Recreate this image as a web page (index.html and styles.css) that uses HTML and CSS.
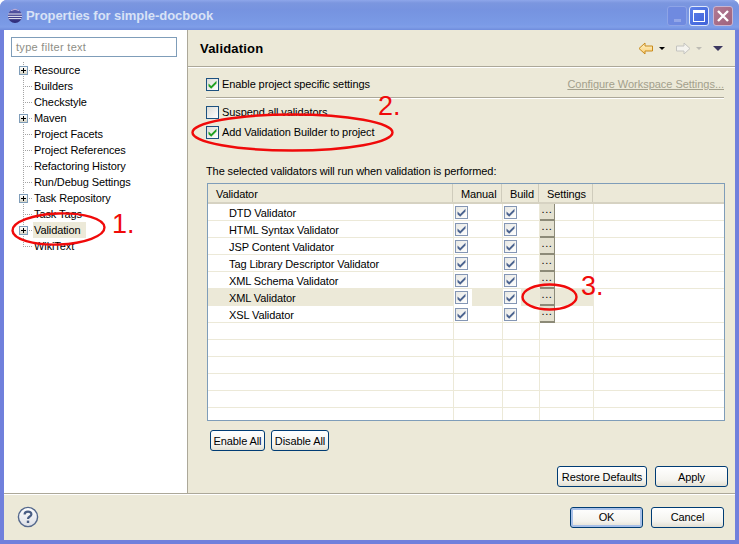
FILE: index.html
```html
<!DOCTYPE html>
<html lang="en">
<head>
<meta charset="utf-8">
<title>Properties for simple-docbook</title>
<link rel="stylesheet" href="styles.css">
</head>
<body>
<svg class="defs" width="0" height="0" aria-hidden="true">
  <symbol id="check" viewBox="0 0 11 11"><path d="M1.5 4.6 L4.2 7 L9.5 1.8 L9.5 4.6 L4.2 9.8 L1.5 7.2 Z" fill="currentColor"/></symbol>
</svg>
<div class="window">
  <header class="titlebar">
    <svg class="app-icon" width="16" height="16" viewBox="0 0 16 16">
      <defs><linearGradient id="ec" x1="0" y1="0" x2="0" y2="1"><stop offset="0" stop-color="#5a5aa8"/><stop offset="1" stop-color="#2c2a78"/></linearGradient></defs>
      <circle cx="8" cy="8" r="7" fill="url(#ec)"/>
      <path d="M1.2 6h13.6M1 8.4h14M1.6 10.6h12.8" stroke="#e8e8f4" stroke-width="1"/>
      <path d="M4 2.6a7 7 0 0 1 8 0" stroke="#c6b8e0" stroke-width="1" fill="none"/>
    </svg>
    <span class="title">Properties for simple-docbook</span>
    <div class="win-btns">
      <span class="win-btn win-min"><i class="min-glyph"></i></span>
      <span class="win-btn win-max"><i class="max-glyph"></i></span>
      <span class="win-btn win-close">
        <svg width="14" height="14" viewBox="0 0 14 14"><path d="M2 2 L12 12 M12 2 L2 12" stroke="#fff" stroke-width="2.4"/></svg>
      </span>
    </div>
  </header>

  <div class="client">
    <div class="panes">
      <aside class="sidebar">
        <div class="filter">type filter text</div>
        <ul class="tree">
          <li class="node"><span class="exp"></span><span class="label">Resource</span></li>
          <li class="node"><span class="noexp"></span><span class="label">Builders</span></li>
          <li class="node"><span class="noexp"></span><span class="label">Checkstyle</span></li>
          <li class="node"><span class="exp"></span><span class="label">Maven</span></li>
          <li class="node"><span class="noexp"></span><span class="label">Project Facets</span></li>
          <li class="node"><span class="noexp"></span><span class="label">Project References</span></li>
          <li class="node"><span class="noexp"></span><span class="label">Refactoring History</span></li>
          <li class="node"><span class="noexp"></span><span class="label">Run/Debug Settings</span></li>
          <li class="node"><span class="exp"></span><span class="label">Task Repository</span></li>
          <li class="node"><span class="noexp"></span><span class="label">Task Tags</span></li>
          <li class="node"><span class="exp"></span><span class="label selected">Validation</span></li>
          <li class="node last"><span class="noexp"></span><span class="label">WikiText</span></li>
        </ul>
      </aside>

      <main class="main">
        <div class="page-head">
          <h1 class="page-title">Validation</h1>
          <div class="page-tools">
            <svg width="16" height="13" viewBox="0 0 16 13"><defs><linearGradient id="ba" x1="0" y1="0" x2="0" y2="1"><stop offset="0" stop-color="#fff4cc"/><stop offset="1" stop-color="#f8cc70"/></linearGradient></defs><path d="M1 6.5 L7 1 V4 H14.5 V9 H7 V12 Z" fill="url(#ba)" stroke="#c88a1c"/></svg>
            <i class="tri tri-black tool-gap-a"></i>
            <svg class="tool-gap-b" width="16" height="13" viewBox="0 0 16 13"><path d="M15 6.5 L9 1 V4 H1.5 V9 H9 V12 Z" fill="#f4f3ee" stroke="#c4c4c0"/></svg>
            <i class="tri tri-grey tool-gap-a"></i>
            <i class="tri-menu"></i>
          </div>
        </div>

        <div class="page-body">
          <div class="project-row">
            <label class="check-row"><span class="cb"><svg class="tick" width="11" height="11"><use href="#check"/></svg></span>Enable project specific settings</label>
            <a class="workspace-link">Configure Workspace Settings...</a>
          </div>
          <hr class="rule">
          <label class="check-row suspend"><span class="cb"></span>Suspend all validators</label>
          <label class="check-row add"><span class="cb"><svg class="tick" width="11" height="11"><use href="#check"/></svg></span>Add Validation Builder to project</label>
          <p class="intro">The selected validators will run when validation is performed:</p>

          <div class="vtable">
            <div class="vhead">
              <span class="vh">Validator</span>
              <span class="vh">Manual</span>
              <span class="vh">Build</span>
              <span class="vh">Settings</span>
            </div>
            <div class="vrow"><span class="vname">DTD Validator</span><span class="vc"><span class="tcb"><svg width="11" height="11"><use href="#check"/></svg></span></span><span class="vc"><span class="tcb"><svg width="11" height="11"><use href="#check"/></svg></span></span><span class="vc vbtn"><button class="dots">...</button></span><span class="vc"></span></div>
            <div class="vrow"><span class="vname">HTML Syntax Validator</span><span class="vc"><span class="tcb"><svg width="11" height="11"><use href="#check"/></svg></span></span><span class="vc"><span class="tcb"><svg width="11" height="11"><use href="#check"/></svg></span></span><span class="vc vbtn"><button class="dots">...</button></span><span class="vc"></span></div>
            <div class="vrow"><span class="vname">JSP Content Validator</span><span class="vc"><span class="tcb"><svg width="11" height="11"><use href="#check"/></svg></span></span><span class="vc"><span class="tcb"><svg width="11" height="11"><use href="#check"/></svg></span></span><span class="vc vbtn"><button class="dots">...</button></span><span class="vc"></span></div>
            <div class="vrow"><span class="vname">Tag Library Descriptor Validator</span><span class="vc"><span class="tcb"><svg width="11" height="11"><use href="#check"/></svg></span></span><span class="vc"><span class="tcb"><svg width="11" height="11"><use href="#check"/></svg></span></span><span class="vc vbtn"><button class="dots">...</button></span><span class="vc"></span></div>
            <div class="vrow"><span class="vname">XML Schema Validator</span><span class="vc"><span class="tcb"><svg width="11" height="11"><use href="#check"/></svg></span></span><span class="vc"><span class="tcb"><svg width="11" height="11"><use href="#check"/></svg></span></span><span class="vc vbtn"><button class="dots">...</button></span><span class="vc"></span></div>
            <div class="vrow active"><span class="vname">XML Validator</span><span class="vc"><span class="tcb"><svg width="11" height="11"><use href="#check"/></svg></span></span><span class="vc"><span class="tcb"><svg width="11" height="11"><use href="#check"/></svg></span></span><span class="vc vbtn"><button class="dots">...</button></span><span class="vc plain"></span></div>
            <div class="vrow"><span class="vname">XSL Validator</span><span class="vc"><span class="tcb"><svg width="11" height="11"><use href="#check"/></svg></span></span><span class="vc"><span class="tcb"><svg width="11" height="11"><use href="#check"/></svg></span></span><span class="vc vbtn"><button class="dots">...</button></span><span class="vc"></span></div>
            <div class="vrow"><span class="vname"></span><span class="vc"></span><span class="vc"></span><span class="vc"></span><span class="vc"></span></div>
            <div class="vrow"><span class="vname"></span><span class="vc"></span><span class="vc"></span><span class="vc"></span><span class="vc"></span></div>
            <div class="vrow"><span class="vname"></span><span class="vc"></span><span class="vc"></span><span class="vc"></span><span class="vc"></span></div>
            <div class="vrow"><span class="vname"></span><span class="vc"></span><span class="vc"></span><span class="vc"></span><span class="vc"></span></div>
            <div class="vrow"><span class="vname"></span><span class="vc"></span><span class="vc"></span><span class="vc"></span><span class="vc"></span></div>
            <div class="vrow"><span class="vname"></span><span class="vc"></span><span class="vc"></span><span class="vc"></span><span class="vc"></span></div>
          </div>

          <div class="table-actions">
            <button class="btn btn-enable">Enable All</button>
            <button class="btn btn-disable">Disable All</button>
          </div>
          <div class="page-actions">
            <button class="btn btn-restore">Restore Defaults</button>
            <button class="btn btn-apply">Apply</button>
          </div>
        </div>
      </main>
    </div>

    <footer class="footer">
      <svg class="help" width="22" height="22" viewBox="0 0 22 22">
        <defs><linearGradient id="hp" x1="0" y1="0" x2="0" y2="1"><stop offset="0" stop-color="#fff"/><stop offset="1" stop-color="#dcdfe6"/></linearGradient></defs>
        <circle cx="11" cy="11" r="9.6" fill="url(#hp)" stroke="#54688c" stroke-width="1.4"/>
        <path d="M7.6 8.4 C7.6 4.8 14.4 4.8 14.4 8.2 C14.4 10.6 11 10.4 11 13" fill="none" stroke="#4a5e84" stroke-width="2.2"/>
        <rect x="9.8" y="14.6" width="2.4" height="2.4" fill="#4a5e84"/>
      </svg>
      <div class="footer-btns">
        <button class="btn btn-ok">OK</button>
        <button class="btn btn-cancel">Cancel</button>
      </div>
    </footer>
  </div>
</div>

<svg class="marks" width="739" height="544" viewBox="0 0 739 544" aria-hidden="true">
  <ellipse cx="58.5" cy="229" rx="46" ry="15.5" transform="rotate(-2 58.5 229)"/>
  <ellipse cx="292.5" cy="132.5" rx="100" ry="18"/>
  <ellipse cx="549.5" cy="297" rx="27" ry="12.5"/>
</svg>
<span class="note note-1">1.</span>
<span class="note note-2">2.</span>
<span class="note note-3">3.</span>
</body>
</html>
```
FILE: styles.css
```css
* { box-sizing: border-box; }
html, body { margin: 0; padding: 0; }
body {
  width: 739px;
  height: 544px;
  overflow: hidden;
  position: relative;
  font: 11px/16px "Liberation Sans", Arial, sans-serif;
  letter-spacing: -0.1px;
  color: #000;
  background: #fff;
}
.defs { position: absolute; }

.window {
  width: 739px;
  height: 544px;
  display: flex;
  flex-direction: column;
  background: #7080dc;
  border-radius: 7px 7px 0 0;
}

.titlebar {
  height: 30px;
  flex: none;
  display: flex;
  align-items: center;
  padding: 2px 6px 0 7px;
  border-radius: 7px 7px 0 0;
  background: linear-gradient(to bottom, #8ea6ea 0, #7b96df 3px, #7693e0 10px, #7a9ae6 24px, #7f9ee8 27px, #6f8cdc 30px);
}
.app-icon { margin-right: 3px; flex: none; }
.title {
  font: bold 13px/16px "Liberation Sans", Arial, sans-serif;
  letter-spacing: -0.05px;
  color: #d8e2f6;
}
.win-btns { margin-left: auto; display: flex; gap: 2px; }
.win-btn {
  width: 20px;
  height: 20px;
  border-radius: 3px;
  border: 1px solid #a8bcec;
  display: flex;
  align-items: center;
  justify-content: center;
  position: relative;
}
.win-min { background: #6f8ae0; border-color: #8ea4e6; }
.win-max { background: linear-gradient(135deg, #5c80ea, #3f62d8); border-color: #dfe7fa; }
.win-close { background: linear-gradient(135deg, #b07a94, #a0627c); border-color: #c8b4d0; margin-left: 2px; }
.min-glyph { width: 7px; height: 3px; background: #92a6e8; margin-top: 8px; }
.max-glyph { width: 12px; height: 12px; border: 1px solid #fff; border-top-width: 3px; }

.client {
  flex: 1;
  margin: 0 4px 4px;
  min-height: 0;
  display: flex;
  flex-direction: column;
  background: #ece9d8;
}
.panes {
  height: 464px;
  flex: none;
  display: flex;
  border-bottom: 1px solid #aca899;
}

.sidebar {
  width: 184px;
  flex: none;
  background: #fff;
  border-right: 1px solid #aca899;
  padding: 7px 0 0 7px;
}
.filter {
  width: 166px;
  height: 20px;
  border: 1px solid #7f9db9;
  padding: 1px 4px;
  color: #8e8e86;
  line-height: 16px;
  letter-spacing: 0.3px;
}
.tree { list-style: none; margin: 5px 0 0; padding: 0 0 0 8px; }
.node {
  height: 16px;
  display: flex;
  align-items: center;
  background-image:
    repeating-linear-gradient(to bottom, #a4a4a4 0 1px, transparent 1px 2px),
    repeating-linear-gradient(to right, #a4a4a4 0 1px, transparent 1px 2px);
  background-repeat: no-repeat;
  background-size: 1px 16px, 10px 1px;
  background-position: 4px 0, 4px 8px;
}
.node.last { background-size: 1px 8px, 10px 1px; }
.exp, .noexp { width: 9px; height: 9px; flex: none; margin-right: 5px; }
.exp {
  border: 1px solid #7f9db9;
  background:
    linear-gradient(#000, #000) center / 5px 1px no-repeat,
    linear-gradient(#000, #000) center / 1px 5px no-repeat,
    linear-gradient(to bottom, #fff, #d8d6c8);
}
.label { padding: 0 1px; position: relative; line-height: 16px; }
.label.selected { background: #ece9d8; padding-right: 5px; }

.main { flex: 1; min-width: 0; display: flex; flex-direction: column; }
.page-head {
  height: 36px;
  flex: none;
  display: flex;
  align-items: center;
  justify-content: space-between;
  padding: 0 12px 0 12px;
  border-bottom: 1px solid #aca899;
  box-sizing: content-box;
  box-shadow: 0 1px 0 #fff;
}
.page-title {
  margin: 1px 0 0;
  font: bold 13px/16px "Liberation Sans", Arial, sans-serif;
  letter-spacing: 0.2px;
}
.page-tools { display: flex; align-items: center; margin-top: 1px; }
.tri, .tri-menu { display: block; width: 0; height: 0; border-style: solid; border-color: transparent; }
.tri { border-width: 3px 3px 0; }
.tri-black { border-top-color: #000; }
.tri-grey { border-top-color: #bdbcb4; }
.tool-gap-a { margin-left: 5px; }
.tool-gap-b { margin-left: 10px; }
.tri-menu { border-width: 5px 5px 0; border-top-color: #3c3860; margin-left: 11px; }

.page-body { flex: 1; position: relative; padding: 9px 11px 0 18px; display: flex; flex-direction: column; }
.project-row { display: flex; justify-content: space-between; align-items: center; height: 16px; }
.check-row { display: flex; align-items: center; gap: 3px; height: 16px; }
.cb {
  width: 13px;
  height: 13px;
  flex: none;
  border: 1px solid #1c5180;
  background: linear-gradient(135deg, #dcdcd7, #fff);
  color: #21a121;
  display: block;
}
.tick { display: block; }
.workspace-link { color: #a3a08c; text-decoration: underline; letter-spacing: -0.03px; }
.rule {
  width: 100%;
  margin: 5px 0 0;
  height: 2px;
  border: 0;
  border-top: 1px solid #aca899;
  border-bottom: 1px solid #fff;
}
.suspend { margin-top: 5px; }
.add { margin-top: 4px; }
.intro { margin: 23px 0 0; height: 16px; }

.vtable {
  margin: 4px 0 0 1px;
  width: 518px;
  height: 238px;
  border: 1px solid #7f9db9;
  background: #fff;
  overflow: hidden;
  flex: none;
}
.vhead {
  height: 20px;
  display: grid;
  grid-template-columns: 245px 49px 37px 54px;
  background: #ece9d8;
  border-bottom: 2px solid #d6d2c2;
}
.vh { padding: 2px 0 0 8px; line-height: 16px; border-right: 1px solid #cfccbc; }
.vrow {
  height: 17px;
  display: grid;
  grid-template-columns: 246px 49px 37px 54px 1fr;
  border-bottom: 1px solid #ece9d8;
}
.vname { padding: 1px 0 0 21px; line-height: 16px; border-right: 1px solid #ece9d8; }
.vc { border-right: 1px solid #ece9d8; padding-left: 1px; display: flex; align-items: center; }
.vc:last-child { border-right: 0; }
.vc.vbtn { padding-left: 0; align-items: flex-start; }
.vrow.active .vname { background: #ece9d8; }
.vrow.active .vc { background: #ece9d8; }
.vrow.active .vc:nth-child(2), .vrow.active .vc:nth-child(3) {
  background: linear-gradient(to right, #fff 18px, #ece9d8 18px);
}
.vrow.active .vc.plain { background: #fff; }
.tcb {
  width: 13px;
  height: 13px;
  border: 1px solid #8496b4;
  background: linear-gradient(135deg, #e8e8e4, #fff);
  color: #4c6490;
  display: block;
}
.tcb svg { display: block; }
.dots {
  width: 15px;
  height: 17px;
  margin: 0;
  padding: 0 0 5px;
  border: 0;
  border-right: 1px solid #8c8a78;
  border-bottom: 2px solid #8c8a78;
  background: #e4e1d0;
  font: 11px/10px "Liberation Sans", Arial, sans-serif;
  letter-spacing: 0.6px;
  color: #000;
}

.btn {
  height: 21px;
  padding: 0;
  border: 1px solid #003c74;
  border-radius: 3px;
  background: linear-gradient(to bottom, #fff, #f4f3ee 70%, #e2dfd2);
  font: 11px/16px "Liberation Sans", Arial, sans-serif;
  letter-spacing: -0.1px;
  color: #000;
}
.table-actions { display: flex; gap: 6px; margin: 9px 0 0 4px; }
.btn-enable { width: 55px; }
.btn-disable { width: 58px; }
.page-actions { display: flex; gap: 8px; justify-content: flex-end; margin: 15px -4px 0 0; }
.btn-restore { width: 90px; }
.btn-apply { width: 73px; }

.footer {
  flex: 1;
  display: flex;
  align-items: center;
  justify-content: space-between;
  padding: 0 11px 0 13px;
  box-shadow: inset 0 1px 0 #fff;
}
.footer-btns { display: flex; gap: 8px; }
.btn-ok {
  width: 73px;
  box-shadow: inset 0 0 0 2px #a8c0e8;
}
.btn-cancel { width: 73px; }

.marks { position: absolute; left: 0; top: 0; pointer-events: none; }
.marks ellipse { fill: none; stroke: #f00a0a; stroke-width: 2.4; }
.note {
  position: absolute;
  font: 27px/30px "Liberation Sans", Arial, sans-serif;
  letter-spacing: 0;
  color: #f00a0a;
}
.note-1 { left: 112px; top: 209px; }
.note-2 { left: 378px; top: 91px; }
.note-3 { left: 581px; top: 271px; }
```
